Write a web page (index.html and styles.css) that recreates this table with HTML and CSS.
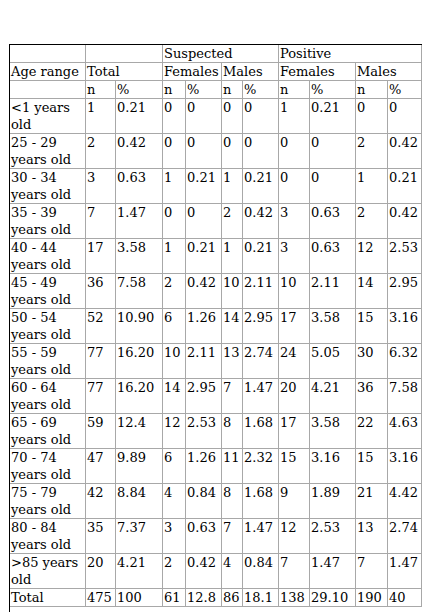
FILE: index.html
```html
<!DOCTYPE html>
<html lang="en">
<head>
    <meta charset="UTF-8">
    <meta name="viewport" content="width=device-width, initial-scale=1.0">
    <title>Age ranges</title>
    <link rel="stylesheet" href="styles.css">
</head>
<body>
    <table class="cases">
        <colgroup>
            <col class="c-age">
            <col class="c-tn"><col class="c-tp">
            <col class="c-sfn"><col class="c-sfp">
            <col class="c-smn"><col class="c-smp">
            <col class="c-pfn"><col class="c-pfp">
            <col class="c-pmn"><col class="c-pmp">
        </colgroup>
        <thead>
            <tr class="head">
                <td></td>
                <td colspan="2"></td>
                <td colspan="4">Suspected</td>
                <td colspan="4">Positive</td>
            </tr>
            <tr class="head">
                <td>Age range</td>
                <td colspan="2">Total</td>
                <td colspan="2">Females</td>
                <td colspan="2">Males</td>
                <td colspan="2">Females</td>
                <td colspan="2">Males</td>
            </tr>
            <tr class="head">
                <td></td>
                <td>n</td><td>%</td>
                <td>n</td><td>%</td>
                <td>n</td><td>%</td>
                <td>n</td><td>%</td>
                <td>n</td><td>%</td>
            </tr>
        </thead>
        <tbody>
            <tr><td>&lt;1 years old</td><td>1</td><td>0.21</td><td>0</td><td>0</td><td>0</td><td>0</td><td>1</td><td>0.21</td><td>0</td><td>0</td></tr>
            <tr><td>25 - 29 years old</td><td>2</td><td>0.42</td><td>0</td><td>0</td><td>0</td><td>0</td><td>0</td><td>0</td><td>2</td><td>0.42</td></tr>
            <tr><td>30 - 34 years old</td><td>3</td><td>0.63</td><td>1</td><td>0.21</td><td>1</td><td>0.21</td><td>0</td><td>0</td><td>1</td><td>0.21</td></tr>
            <tr><td>35 - 39 years old</td><td>7</td><td>1.47</td><td>0</td><td>0</td><td>2</td><td>0.42</td><td>3</td><td>0.63</td><td>2</td><td>0.42</td></tr>
            <tr><td>40 - 44 years old</td><td>17</td><td>3.58</td><td>1</td><td>0.21</td><td>1</td><td>0.21</td><td>3</td><td>0.63</td><td>12</td><td>2.53</td></tr>
            <tr><td>45 - 49 years old</td><td>36</td><td>7.58</td><td>2</td><td>0.42</td><td>10</td><td>2.11</td><td>10</td><td>2.11</td><td>14</td><td>2.95</td></tr>
            <tr><td>50 - 54 years old</td><td>52</td><td>10.90</td><td>6</td><td>1.26</td><td>14</td><td>2.95</td><td>17</td><td>3.58</td><td>15</td><td>3.16</td></tr>
            <tr><td>55 - 59 years old</td><td>77</td><td>16.20</td><td>10</td><td>2.11</td><td>13</td><td>2.74</td><td>24</td><td>5.05</td><td>30</td><td>6.32</td></tr>
            <tr><td>60 - 64 years old</td><td>77</td><td>16.20</td><td>14</td><td>2.95</td><td>7</td><td>1.47</td><td>20</td><td>4.21</td><td>36</td><td>7.58</td></tr>
            <tr><td>65 - 69 years old</td><td>59</td><td>12.4</td><td>12</td><td>2.53</td><td>8</td><td>1.68</td><td>17</td><td>3.58</td><td>22</td><td>4.63</td></tr>
            <tr><td>70 - 74 years old</td><td>47</td><td>9.89</td><td>6</td><td>1.26</td><td>11</td><td>2.32</td><td>15</td><td>3.16</td><td>15</td><td>3.16</td></tr>
            <tr><td>75 - 79 years old</td><td>42</td><td>8.84</td><td>4</td><td>0.84</td><td>8</td><td>1.68</td><td>9</td><td>1.89</td><td>21</td><td>4.42</td></tr>
            <tr><td>80 - 84 years old</td><td>35</td><td>7.37</td><td>3</td><td>0.63</td><td>7</td><td>1.47</td><td>12</td><td>2.53</td><td>13</td><td>2.74</td></tr>
            <tr><td>&gt;85 years old</td><td>20</td><td>4.21</td><td>2</td><td>0.42</td><td>4</td><td>0.84</td><td>7</td><td>1.47</td><td>7</td><td>1.47</td></tr>
            <tr class="total"><td>Total</td><td>475</td><td>100</td><td>61</td><td>12.8</td><td>86</td><td>18.1</td><td>138</td><td>29.10</td><td>190</td><td>40</td></tr>
        </tbody>
    </table>
    <div class="tail"></div>
</body>
</html>
```

FILE: styles.css
```css
* {
    box-sizing: border-box;
}

body, html {
    margin: 0;
    padding: 0;
    background-color: #fff;
}

.cases {
    margin: 44px 0 0 9px;
    width: 413px;
    table-layout: fixed;
    border-collapse: separate;
    border-spacing: 0;
    border-top: 1px solid #000;
    border-left: 1px solid #000;
    font-family: "DejaVu Serif", serif;
    font-size: 13px;
    line-height: 17px;
    color: #000;
}

.cases td {
    padding: 0 0 0 1px;
    vertical-align: top;
    white-space: normal;
    border-right: 1px solid #a8a8a8;
    border-bottom: 1px solid #a8a8a8;
    overflow: hidden;
}

.cases tbody tr {
    height: 35px;
}

.cases .head,
.cases .total {
    height: 18px;
}

.tail {
    margin-left: 9px;
    height: 20px;
    border-left: 1px solid #000;
}

.c-age { width: 76px; }
.c-tn { width: 30px; }
.c-tp { width: 47px; }
.c-sfn { width: 23px; }
.c-sfp { width: 36px; }
.c-smn { width: 21px; }
.c-smp { width: 36px; }
.c-pfn { width: 31px; }
.c-pfp { width: 46px; }
.c-pmn { width: 32px; }
.c-pmp { width: 34px; }
```
